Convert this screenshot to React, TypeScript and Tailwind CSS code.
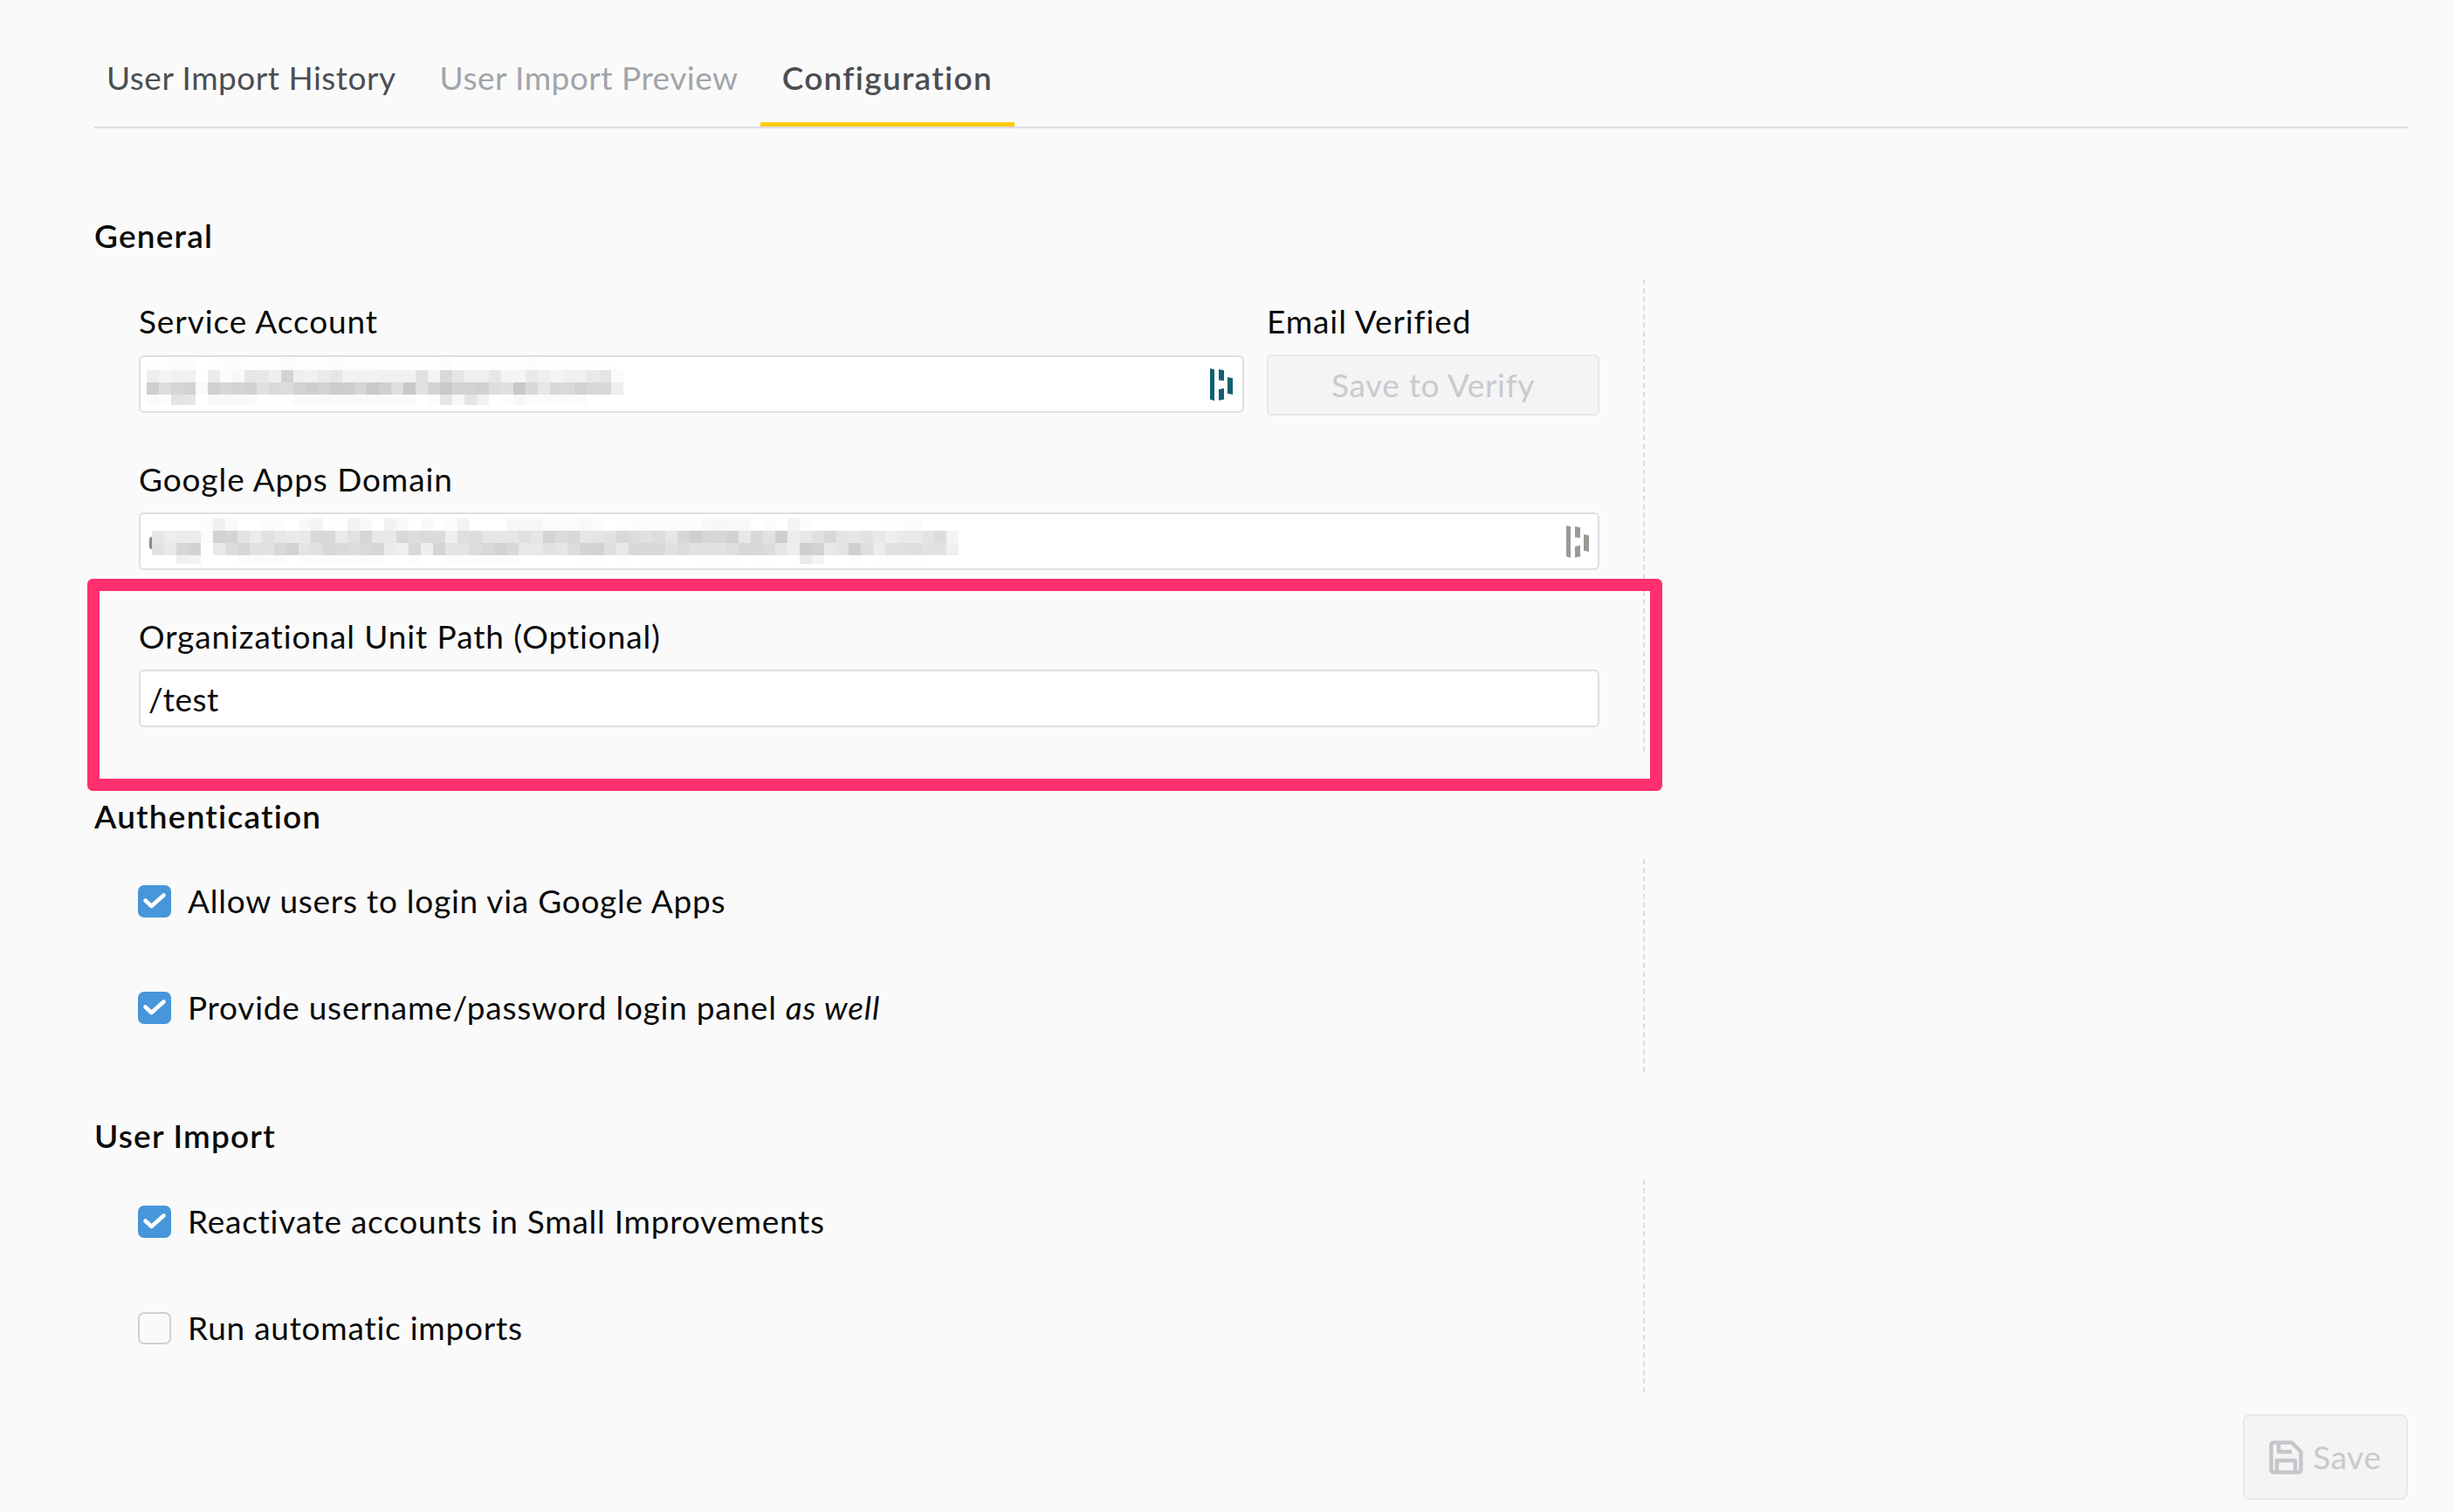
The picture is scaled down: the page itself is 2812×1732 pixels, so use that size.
const accountCells = [
  "fd fd fc fc ff fd fc fc fd fd fd fb fd fd fd fc fd fd fd fd fd fd fd fe fc fe fe fe fe fe fe fc fd fd fe fe fe fe ff",
  "ee f3 f0 f1 ff ec fb f8 e6 e7 ef d3 ef f1 ea e6 f1 f1 f2 f0 f0 f0 e0 f3 d9 e6 f0 ef e7 f5 f5 e9 ee f4 f0 f0 e9 e5 fa",
  "ce dd d6 d2 fa d0 d6 d3 d1 e0 d9 dc d2 ce d2 cc cd d6 c9 d0 df c7 e2 d3 c9 d2 d2 d0 de e0 c8 d8 e6 d8 da d2 d8 d8 ee",
  "fa fb e4 e6 ff f8 f8 f8 f9 ff fe fe fa fa f9 fa fa fa fa fa fa fa ff fc e7 f7 e4 f2 ff fc f7 fb fb fb fb fb ff ff ff",
]

const domainCells = [
  "ff ff ff ff fc f0 fa ff ff fc fc ff f8 f4 fe fe f2 f9 ff f2 f8 ff f9 ff fb f2 ff ff ff f6 f6 f6 fb fb fb f8 fb ff fd fc fb fc fa fc fc f8 f6 f8 f8 ff fc ff f4 fc ff ff ff ff ff ff fe fd fb ff ff ff",
  "e6 ee ec ec fb d2 d4 e2 eb e0 e6 ea e9 d8 d8 ea e2 d6 e8 e8 d8 dc da dc ef de dc e6 e6 e6 e0 e6 d4 dc d8 e6 e4 e2 d8 dc e0 dc e6 d6 cf d6 d6 d2 e8 d8 e2 ce ec e8 e0 d8 e4 e6 e2 e8 ee ea ea e4 dc f4",
  "e2 e8 d6 d2 ff e8 dc d6 e0 e2 d8 d2 e4 e0 d8 da dc da d6 ec ee d8 ee d4 e4 e4 dc d8 d2 d8 e8 e8 e2 e6 dc d4 d2 e0 e8 d8 d8 d8 e0 dc e2 e0 e2 de d8 d8 dc e6 ee cf d2 e8 e4 d0 de ec e2 e0 de e2 e2 f0",
  "ff ff f0 f2 ff ff ff fb fb fb fb ff fc fc fc fc fb fb fb ff ff fc ff ff fc fc fc fc fc fc ff ff ff ff ff fd fd ff fd ff fd fd fd ff ff fd fd fd ff fe fe ff ff ea f5 ff ff fd ff fd fd fd fe ff ff ff",
]

function Pixelated({ rows, rowHeights, className }: { rows: string[]; rowHeights: number[]; className?: string }) {
  const grid = rows.map((row) => row.split(" "))
  const width = grid[0].length * 14
  const height = rowHeights.reduce((a, b) => a + b, 0)
  let y = 0

  return (
    <svg width={width} height={height} viewBox={`0 0 ${width} ${height}`} className={`block shrink-0 ${className ?? ""}`}>
      {grid.map((cells, r) => {
        const top = y
        y += rowHeights[r]
        return cells.map((c, i) => (
          <rect key={`${r}-${i}`} x={i * 14} y={top} width={14.5} height={rowHeights[r] + 0.5} fill={`#${c}${c}${c}`} />
        ))
      })}
    </svg>
  )
}

function DashlaneMark({ color }: { color: string }) {
  return (
    <svg width="26" height="37" viewBox="0 0 26 37" className="block shrink-0" fill={color}>
      <path d="M0 0l5 1.2v35.8l-5-1.4z" />
      <path d="M10 1l6 1.2v11.8l-6-.6z" />
      <path d="M10 24l6-1.2v12.6l-6 1.4z" />
      <path d="M20 10l6 1.2v18.8l-6-1.2z" />
    </svg>
  )
}

function Checkbox({ checked, label }: { checked: boolean; label: React.ReactNode }) {
  return (
    <div className="flex h-[38px] items-center gap-[19px] -ml-px">
      {checked ? (
        <div className="h-[37px] w-[38px] rounded-[7px] bg-[#4796da] flex items-center justify-center">
          <svg width="38" height="37" viewBox="0 0 38 37" fill="none" stroke="#fff" strokeWidth="4.5" strokeLinecap="round" strokeLinejoin="round">
            <path d="M8.5 17.5l7 6.5L29.5 11.5" />
          </svg>
        </div>
      ) : (
        <div className="h-[37px] w-[38px] rounded-[7px] border-2 border-[#cfcfd6] bg-[#fafafa]" />
      )}
      <span className="text-[37px] leading-[44px] tracking-[0.75px] text-[#0b0b0b]">{label}</span>
    </div>
  )
}

function SectionHeading({ children }: { children: React.ReactNode }) {
  return <h2 className="text-[37px] leading-[44px] font-semibold text-[#0b0b0b] tracking-[1.2px]">{children}</h2>
}

function Field({ label, className, children }: { label: string; className?: string; children: React.ReactNode }) {
  return (
    <div>
      <label className={`block text-[37px] leading-[44px] tracking-[0.9px] text-[#0b0b0b] ${className ?? "mb-[15px]"}`}>{label}</label>
      {children}
    </div>
  )
}

export default function App() {
  return (
    <div className="relative min-h-[1732px] bg-[#fafafa] pl-[108px] pr-[54px] font-['Lato',sans-serif]">
      {/* Tabs */}
      <div className="flex h-[147px] items-end border-b-2 border-[#dedee3]">
        <div className="flex h-[146px] -ml-[11px]">
          <div className="flex items-center pt-[70px] pb-[36px] px-[25px] text-[37px] tracking-[0.5px] text-[#4b4e53]">User Import History</div>
          <div className="flex items-center pt-[70px] pb-[36px] px-[25px] text-[37px] tracking-[0.5px] text-[#a1a5a9]">User Import Preview</div>
          <div className="flex items-center pt-[70px] pb-[31px] px-[25px] text-[37px] tracking-[1.3px] font-semibold text-[#4b4e53] border-b-[5px] border-[#ffcc00]">Configuration</div>
        </div>
      </div>

      <div className="pt-[101px] w-[1776px]">
        <SectionHeading>General</SectionHeading>
        <div className="mt-[28px] pt-[26px] pb-[28px] pl-[51px] pr-[50px] border-r-2 border-dashed border-[#dcdce0]">
          <div className="flex gap-[26px]">
            <div className="flex-1">
              <Field label="Service Account" className="mb-[17px]">
                <div className="h-[66px] rounded-[6px] border-2 border-[#dfdfe5] bg-white flex items-center justify-between pl-[7px] pr-[11px]">
                  <Pixelated rows={accountCells} rowHeights={[14, 14, 14, 12]} className="mb-[7px]" />
                  <DashlaneMark color="#125f73" />
                </div>
              </Field>
            </div>
            <div className="w-[381px]">
              <Field label="Email Verified" className="mb-[17px]">
                <button className="h-[70px] w-full -mt-px rounded-[6px] border-2 border-[#e8e8ea] bg-[#f4f4f5] text-[37px] tracking-[0.65px] text-[#c8cacd]">Save to Verify</button>
              </Field>
            </div>
          </div>
          <div className="mt-[51px]">
            <Field label="Google Apps Domain" className="mb-[16px]">
              <div className="h-[66px] rounded-[6px] border-2 border-[#dfdfe5] bg-white flex items-center pl-[10px] pr-[10px]">
                <div className="mt-[4px] h-[14px] w-[3px] shrink-0 rounded-l-full bg-[#8a8a8a]" />
                <Pixelated rows={domainCells} rowHeights={[14, 14, 14, 10]} />
                <div className="ml-auto">
                  <DashlaneMark color="#9c9896" />
                </div>
              </div>
            </Field>
          </div>
          <div className="mt-[54px]">
            <Field label="Organizational Unit Path (Optional)" className="mb-[16px]">
              <input
                readOnly
                value="/test"
                className="block h-[66px] w-full rounded-[6px] border-2 border-[#dfdfe5] bg-white px-[9px] text-[37px] tracking-[0.5px] text-[#0b0b0b] outline-none"
              />
            </Field>
          </div>
        </div>

        <div className="mt-[52px]">
          <SectionHeading>Authentication</SectionHeading>
        </div>
        <div className="mt-[27px] pt-[29px] pb-[55px] pl-[51px] pr-[50px] border-r-2 border-dashed border-[#dcdce0] flex flex-col gap-[84px]">
          <Checkbox checked label="Allow users to login via Google Apps" />
          <Checkbox checked label={<>Provide username/password login panel <em>as well</em></>} />
        </div>

        <div className="mt-[51px]">
          <SectionHeading>User Import</SectionHeading>
        </div>
        <div className="mt-[28px] pt-[29px] pb-[55px] pl-[51px] pr-[50px] border-r-2 border-dashed border-[#dcdce0] flex flex-col gap-[84px]">
          <Checkbox checked label="Reactivate accounts in Small Improvements" />
          <Checkbox checked={false} label="Run automatic imports" />
        </div>
      </div>

      <div className="flex justify-end mt-[25px]">
        <button className="flex h-[98px] w-[189px] items-center justify-center gap-[11px] rounded-[8px] border-2 border-[#e8e8ea] bg-[#f4f4f5] text-[37px] tracking-[0.65px] text-[#c8cacd]">
          <svg width="39" height="39" viewBox="0 0 39 39" fill="none" stroke="#c5c6ca" strokeWidth="4.5" strokeLinejoin="round">
            <path d="M5 2.5h21l10.5 10.5v21a2.5 2.5 0 0 1-2.5 2.5H5a2.5 2.5 0 0 1-2.5-2.5V5A2.5 2.5 0 0 1 5 2.5z" />
            <path d="M11 3v10h15" />
            <path d="M9 36V23h21v13" />
          </svg>
          Save
        </button>
      </div>

      {/* Highlight frame drawn on top of the screenshot */}
      <div className="absolute left-[100px] top-[663px] h-[243px] w-[1804px] rounded-[6px] border-[14px] border-[#ff2f6e] pointer-events-none" />
    </div>
  )
}
